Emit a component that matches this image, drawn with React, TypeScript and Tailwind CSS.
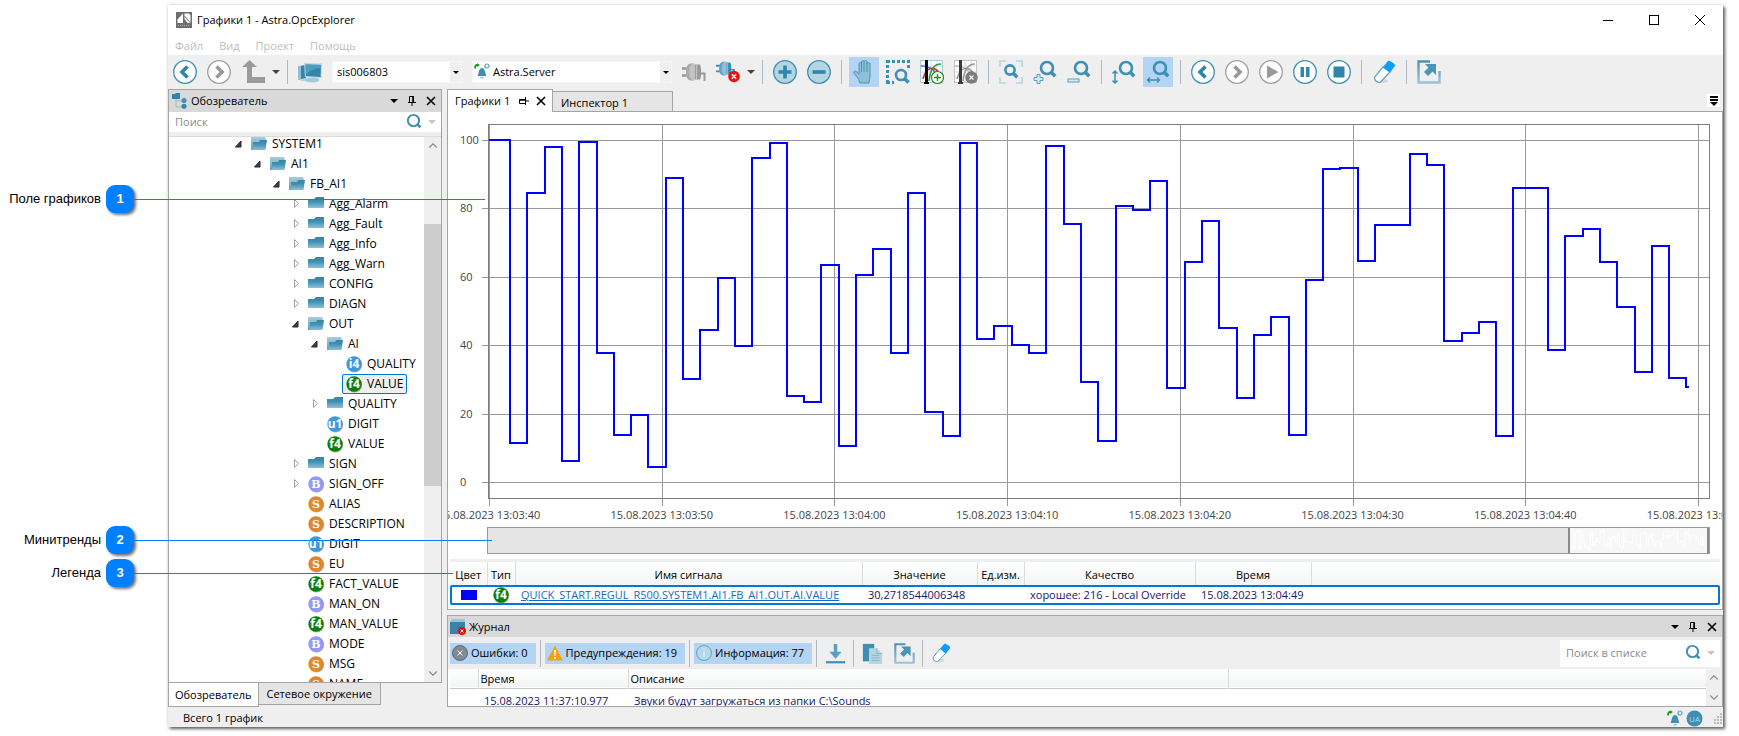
import type { ReactNode } from 'react'
import { ChevronDown, ChevronUp } from 'lucide-react'

type NodeKind = 'open' | 'closed' | 'i4' | 'f4' | 'u1' | 'B' | 'S'

interface TreeItem {
  name: string
  level: number
  kind: NodeKind
  expandable?: boolean
  selected?: boolean
}

const tree: TreeItem[] = [
  { name: 'SYSTEM1', level: 0, kind: 'open' },
  { name: 'AI1', level: 1, kind: 'open' },
  { name: 'FB_AI1', level: 2, kind: 'open' },
  { name: 'Agg_Alarm', level: 3, kind: 'closed', expandable: true },
  { name: 'Agg_Fault', level: 3, kind: 'closed', expandable: true },
  { name: 'Agg_Info', level: 3, kind: 'closed', expandable: true },
  { name: 'Agg_Warn', level: 3, kind: 'closed', expandable: true },
  { name: 'CONFIG', level: 3, kind: 'closed', expandable: true },
  { name: 'DIAGN', level: 3, kind: 'closed', expandable: true },
  { name: 'OUT', level: 3, kind: 'open' },
  { name: 'AI', level: 4, kind: 'open' },
  { name: 'QUALITY', level: 5, kind: 'i4' },
  { name: 'VALUE', level: 5, kind: 'f4', selected: true },
  { name: 'QUALITY', level: 4, kind: 'closed', expandable: true },
  { name: 'DIGIT', level: 4, kind: 'u1' },
  { name: 'VALUE', level: 4, kind: 'f4' },
  { name: 'SIGN', level: 3, kind: 'closed', expandable: true },
  { name: 'SIGN_OFF', level: 3, kind: 'B', expandable: true },
  { name: 'ALIAS', level: 3, kind: 'S' },
  { name: 'DESCRIPTION', level: 3, kind: 'S' },
  { name: 'DIGIT', level: 3, kind: 'u1' },
  { name: 'EU', level: 3, kind: 'S' },
  { name: 'FACT_VALUE', level: 3, kind: 'f4' },
  { name: 'MAN_ON', level: 3, kind: 'B' },
  { name: 'MAN_VALUE', level: 3, kind: 'f4' },
  { name: 'MODE', level: 3, kind: 'B' },
  { name: 'MSG', level: 3, kind: 'S' },
  { name: 'NAME', level: 3, kind: 'S' },
]

const samples = [
  100, 11.5, 84.6, 98, 6.2, 99.5, 37.8, 13.8, 19.7, 4.5, 89, 30.2, 44.5, 59.7, 39.9, 94.8, 99.2,
  25.2, 23.5, 63.5, 10.6, 60.6, 68.2, 37.8, 84.6, 20.6, 13.5, 99.2, 41.9, 45.7, 40.2, 37.8, 98.3,
  75.5, 29.3, 12.1, 80.8, 79.6, 88.1, 27.6, 64.4, 76.4, 45.1, 24.7, 43.1, 48.1, 13.8, 59.2, 91.6,
  91.9, 64.7, 75.2, 75.2, 96, 92.8, 41.3, 43.7, 46.9, 13.5, 86.1, 86.1, 38.7, 72, 74.1, 64.4, 51.3,
  32.3, 69.1, 30.5,
]

const timeLabels = [
  '15.08.2023 13:03:40',
  '15.08.2023 13:03:50',
  '15.08.2023 13:04:00',
  '15.08.2023 13:04:10',
  '15.08.2023 13:04:20',
  '15.08.2023 13:04:30',
  '15.08.2023 13:04:40',
  '15.08.2023 13:04:50',
]

const valueY = (v: number) => Math.round(358 - v * 3.42)

// ступенчатая линия тренда в координатах поля графиков
function trendPath() {
  let d = `M7 ${valueY(samples[0])}`
  samples.forEach((v, i) => {
    d += `V${valueY(v)}H${Math.round(28 + i * 17.3)}`
  })
  return d + `V${valueY(27.9)}h3`
}

const badgeColors: Record<string, string> = {
  i4: '#3b97de',
  u1: '#3b97de',
  f4: '#0b800b',
  B: '#9797f7',
  S: '#e0862c',
}

function TypeBadge({ kind }: { kind: string }) {
  return (
    <svg className="w-4 h-4 shrink-0 overflow-visible" viewBox="0 0 16 16">
      <circle cx="8.6" cy="8.8" r="7.6" fill="#777" opacity=".6" />
      <circle cx="8" cy="8" r="7.7" fill={badgeColors[kind]} />
      {kind.length > 1 ? (
        <text x="8" y="12" textAnchor="middle" fill="#fff" className="font-['Open_Sans',sans-serif] text-[12px] font-bold">
          {kind}
        </text>
      ) : (
        <text x="8" y="12" textAnchor="middle" fill="#fff" className="font-['DejaVu_Serif',serif] text-[11px] font-bold">
          {kind}
        </text>
      )}
    </svg>
  )
}

function Folder({ open }: { open: boolean }) {
  return (
    <svg className="w-4 h-4 shrink-0" viewBox="0 0 16 16">
      <defs>
        <linearGradient id="folderBack" x1="0" y1="0" x2="0" y2="1">
          <stop offset="0" stopColor="#a8ccdc" />
          <stop offset="1" stopColor="#5fa0bc" />
        </linearGradient>
        <linearGradient id="folderFront" x1="0" y1="0" x2="0" y2="1">
          <stop offset="0" stopColor="#3585a8" />
          <stop offset=".4" stopColor="#3f8fb2" />
          <stop offset="1" stopColor="#8fc0d5" />
        </linearGradient>
      </defs>
      {open ? (
        <>
          <path d="M0 1h14l1 3v8l-13 2H0z" fill="url(#folderBack)" />
          <path d="M2 6h6l1-2h7l-1.500 10H2z" fill="url(#folderFront)" />
        </>
      ) : (
        <path d="M0 3h6l2-2h8v11H0z" fill="url(#folderFront)" />
      )}
    </svg>
  )
}

function Expander({ item }: { item: TreeItem }) {
  return (
    <svg className="w-2 h-3 shrink-0" viewBox="0 0 8 12">
      {item.kind === 'open' && <path d="M6 3v6H.500z" fill="#404040" stroke="#262626" />}
      {item.expandable && <path d="M2.500 1.500v8l4-4z" fill="#fff" stroke="#a0a0a0" />}
    </svg>
  )
}

function Caret({ className = 'text-[#444]' }: { className?: string }) {
  return (
    <svg className={`w-2 h-1 shrink-0 ${className}`} viewBox="0 0 8 4">
      <path d="M0 0h8L4 4z" fill="currentColor" />
    </svg>
  )
}

function Cross({ className = '' }: { className?: string }) {
  return (
    <svg className={`w-[10px] h-[10px] shrink-0 ${className}`} viewBox="0 0 10 10" stroke="currentColor">
      <path d="M1 1l8 8M9 1L1 9" strokeWidth="1.600" />
    </svg>
  )
}

function Icon({ children, className = 'w-6 h-6' }: { children: ReactNode; className?: string }) {
  return (
    <svg className={`${className} shrink-0`} viewBox="0 0 24 24" fill="none">
      {children}
    </svg>
  )
}

function Lens({ x = 12, y = 9, r = 6 }: { x?: number; y?: number; r?: number }) {
  return (
    <>
      <circle cx={x} cy={y} r={r} stroke="#3d8fb3" strokeWidth="2.600" />
      <path d={`M${x + r * 0.7} ${y + r * 0.7}l4 4`} stroke="#3d8fb3" strokeWidth="3.500" />
    </>
  )
}

function Round({ color, fill = '#fff', children }: { color: string; fill?: string; children: ReactNode }) {
  return (
    <Icon>
      <circle cx="12" cy="12" r="11.300" stroke={color} strokeWidth="1.300" fill={fill} />
      {children}
    </Icon>
  )
}

function Plug({ color, light }: { color: string; light: string }) {
  return (
    <>
      <path d="M0 8.500h6M0 15.500h6" stroke={color} strokeWidth="2.400" />
      <path d="M4 12c0-6 2-8.500 6-8.500h3v17h-3c-4 0-6-2.500-6-8.500z" fill={light} />
      <path d="M4 12c0-6 2-8.500 6-8.500h1C8 5 7 8 7 12s1 7 4 8.500h-1c-4 0-6-2.500-6-8.500z" fill={color} opacity=".6" />
      <path d="M13 4.500h5c1.500 2 1.500 13 0 15h-5z" fill={color} />
      <path d="M14.500 5v14" stroke={light} strokeWidth="1.200" />
      <path d="M19 13.500h3.500V21" stroke={color} strokeWidth="2" />
    </>
  )
}

function Eraser({ className }: { className?: string }) {
  return (
    <Icon className={className}>
      <ellipse cx="9" cy="21" rx="7" ry="2" fill="#ccc" opacity=".7" />
      <path d="M11 7l7 5-9 9.500c-2 2-8-1-6-5z" fill="#fff" stroke="#5a9fc2" strokeWidth="1.200" />
      <path d="M11 7l5-6c1-1 8 3 7 5l-5 6.500z" fill="#0d9df5" />
    </Icon>
  )
}

function Export({ className }: { className?: string }) {
  return (
    <Icon className={className}>
      <path d="M13 1.500H1.500v21h21V11" stroke="url(#exportFrame)" strokeWidth="2.400" />
      <path d="M8 4h11v11l-3.500-3.500-4.500 4.500-4-4L11.500 7.500z" fill="#4a94b5" />
      <defs>
        <linearGradient id="exportFrame" x1="0" y1="0" x2="0" y2="1">
          <stop offset="0" stopColor="#4a94b5" />
          <stop offset="1" stopColor="#9ac4d6" />
        </linearGradient>
      </defs>
    </Icon>
  )
}

function Bell() {
  return (
    <svg className="w-4 h-4 shrink-0" viewBox="0 0 16 16" fill="none">
      <path d="M1 5.500C1 3 1.500 1.800 3.500 2" stroke="#1a9a1a" strokeWidth="1.800" />
      <path d="M3 .300l3 1.700-3 2z" fill="#1a9a1a" />
      <path d="M3.500 13c1.500-2 1-8 4.500-8s3 6 4.500 8z" fill="#3d8fb3" />
      <path d="M6.500 14h3v1.500h-3z" fill="#8fc0d5" />
      <circle cx="13" cy="3" r="2" stroke="#5fa0c0" strokeWidth="1.200" />
    </svg>
  )
}

function ChartGlyph({ curves }: { curves: string[] }) {
  return (
    <>
      <rect x=".5" y=".5" width="22" height="22" fill="#fff" stroke={curves[3]} />
      <path d="M1 6h21M1 12h21M1 17h21M11 1v21M17 1v21" stroke={curves[4]} strokeWidth=".8" />
      <path d="M1 6c9-1 14 6 19 11" stroke={curves[0]} strokeWidth="1.500" />
      <path d="M3 19C6 7 14 5 20 14" stroke={curves[1]} strokeWidth="1.500" />
      <path d="M9 21c1-10 5-17 12-17" stroke={curves[2]} strokeWidth="1.500" />
      <path d="M5 0h3v22h1v2H4v-2h1z" fill={curves[5]} />
    </>
  )
}

function ToolButton({ label, active, children }: { label: string; active?: boolean; children: ReactNode }) {
  return (
    <button
      aria-label={label}
      className={`w-[30px] h-[30px] shrink-0 flex items-center justify-center ${active ? 'bg-[#b3d5f3]' : ''}`}
    >
      {children}
    </button>
  )
}

function Separator({ className = 'h-6 mx-[3px]' }: { className?: string }) {
  return <div className={`w-px shrink-0 bg-[#b0b8bf] ${className}`} />
}

function Combo({ label, value, className, children }: { label: string; value: string; className: string; children?: ReactNode }) {
  return (
    <div className={`relative h-[22px] shrink-0 bg-white ${className}`}>
      <select
        aria-label={label}
        defaultValue={value}
        className={`w-full h-full appearance-none border border-[#f5f5f5] outline-none ${children ? 'pl-5' : 'pl-1'}`}
      >
        <option>{value}</option>
      </select>
      {children && <span className="absolute left-[2px] top-[2px] pointer-events-none">{children}</span>}
      <span className="absolute right-px top-px bottom-px w-[11px] bg-[#efefef] flex items-center justify-center pointer-events-none">
        <svg className="w-[6px] h-[3px]" viewBox="0 0 6 3">
          <path d="M0 0h6L3 3z" fill="#000" />
        </svg>
      </span>
    </div>
  )
}

function Pin({ className = '' }: { className?: string }) {
  return (
    <svg className={`w-[10px] h-[10px] ${className}`} viewBox="0 0 10 10" fill="none" stroke="currentColor">
      <path d="M2.500 6V.500h4V6M1 6.500h8M5 6.500V10M6.500 1v5" />
      <path d="M6 .500V6" strokeWidth="1.500" />
    </svg>
  )
}

function PanelButtons() {
  return (
    <div className="ml-auto flex items-center gap-[9px] pr-[5px]">
      <button aria-label="Меню">
        <Caret className="text-black" />
      </button>
      <button aria-label="Закрепить">
        <Pin />
      </button>
      <button aria-label="Закрыть">
        <Cross />
      </button>
    </div>
  )
}

function SearchBox({ id, text, className }: { id: string; text: string; className: string }) {
  return (
    <div className={`bg-white flex items-center pl-[6px] pr-[5px] ${className}`}>
      <label htmlFor={id} className="sr-only">
        {text}
      </label>
      <input id={id} placeholder={text} className="flex-1 min-w-0 outline-none placeholder:text-[#8a8a8a]" />
      <button aria-label={text}>
        <Icon className="w-[18px] h-[18px]">
          <Lens x={10} y={10} r={7.5} />
        </Icon>
      </button>
      <Caret className="ml-1 text-[#c4c4c4]" />
    </div>
  )
}

function Toolbar() {
  return (
    <div className="h-[34px] shrink-0 flex items-center gap-1 pl-[2px] overflow-hidden">
      <ToolButton label="Назад">
        <Round color="#3d8fb3">
          <path d="M14.500 6.500L9 12l5.500 5.500" stroke="#3085ab" strokeWidth="3.600" />
        </Round>
      </ToolButton>
      <ToolButton label="Вперёд">
        <Round color="#a0a0a0">
          <path d="M9.500 6.500L15 12l-5.500 5.500" stroke="#999" strokeWidth="3.600" />
        </Round>
      </ToolButton>
      <ToolButton label="Вверх">
        <Icon>
          <path d="M8.500 0L16 7h-5v10h14v6H6V7H1z" fill="#9b9b9b" />
        </Icon>
      </ToolButton>
      <Caret />
      <Separator />
      <ToolButton label="Компьютер">
        <Icon>
          <path d="M0 6l8-1v14l-8 1z" fill="#8fc0d5" />
          <path d="M3 6l5-1v13l-5 1z" fill="#3585a8" />
          <path d="M2 20l5-2 3 2v1H3z" fill="#b5d5e2" />
          <ellipse cx="14" cy="20" rx="7.500" ry="2.600" fill="#a5cbdb" />
          <path d="M6 3l18 .500-.500 14.500L7 17z" fill="#b5d5e2" />
          <path d="M7.500 4.500l15.500.500-.500 12L8 16z" fill="#3585a8" />
          <path d="M7.500 4.500l15.500.500-.200 3C16 8.500 12 11 8 14z" fill="#4f9dbf" />
        </Icon>
      </ToolButton>
      <Combo label="Узел" value="sis006803" className="w-[130px] ml-[3px]" />
      <Combo label="Сервер" value="Astra.Server" className="w-[200px] ml-[6px]">
        <Bell />
      </Combo>
      <div className="ml-[3px]">
        <ToolButton label="Подключить">
          <Icon>
            <Plug color="#999" light="#c4c4c4" />
          </Icon>
        </ToolButton>
      </div>
      <ToolButton label="Отключить">
        <Icon>
          <g transform="translate(0 -1) scale(.8)">
            <Plug color="#3d8fb3" light="#8fc0d5" />
          </g>
          <circle cx="18" cy="16.500" r="5.800" fill="#f20d0d" />
          <path d="M15.800 14.300l4.400 4.400m0-4.400l-4.400 4.400" stroke="#fff" strokeWidth="1.500" />
        </Icon>
      </ToolButton>
      <Caret />
      <Separator />
      <ToolButton label="Добавить">
        <Round color="#3d8fb3" fill="#b5d5e2">
          <path d="M12 5.500v13M5.500 12h13" stroke="#3085ab" strokeWidth="3.600" />
        </Round>
      </ToolButton>
      <ToolButton label="Удалить">
        <Round color="#3d8fb3" fill="#b5d5e2">
          <path d="M5.500 12h13" stroke="#3085ab" strokeWidth="3.600" />
        </Round>
      </ToolButton>
      <Separator />
      <ToolButton label="Перемещение" active>
        <Icon>
          <path
            d="M8 23c-1-5-6-9-6.500-11 1.500-2 4 0 5.500 2V4c0-2 2.500-2 2.500 0V2c0-2 2.500-2 2.500 0 0-2 3-2 3 0v2c0-2 3-2 3 0v12c0 4-1 4-1 7z"
            fill="#8fbfd8"
            stroke="#4a94b5"
          />
          <path d="M9.500 4v8M12 2v10M15 3v9" stroke="#4a94b5" />
        </Icon>
      </ToolButton>
      <ToolButton label="Выделить область">
        <Icon>
          <path d="M0 1.500h24" stroke="#3d8fb3" strokeWidth="3" strokeDasharray="4 2 3 2 3 2 3 2 3" />
          <path d="M1.500 5v19M22.500 0v8" stroke="#3d8fb3" strokeWidth="3" strokeDasharray="3 2" />
          <path d="M0 22.500h8" stroke="#3d8fb3" strokeWidth="3" strokeDasharray="4 2" />
          <Lens x={15} y={15} r={5} />
        </Icon>
      </ToolButton>
      <ToolButton label="Добавить курсор">
        <Icon>
          <ChartGlyph curves={['#3d6fe0', '#e02020', '#2f9a3f', '#a8ccdc', '#bcdcf0', '#000']} />
          <circle cx="17.500" cy="17.500" r="6" fill="#fff" stroke="#2a8a2a" strokeWidth="1.200" />
          <path d="M17.500 14v7M14 17.500h7" stroke="#2a8a2a" strokeWidth="1.400" />
        </Icon>
      </ToolButton>
      <ToolButton label="Удалить курсор">
        <Icon>
          <ChartGlyph curves={['#bbb', '#999', '#999', '#c4c4c4', '#d4d4d4', '#3a3a3a']} />
          <circle cx="17.500" cy="17.500" r="6.200" fill="#7c7c7c" />
          <path d="M15.500 15.500l4 4m0-4l-4 4" stroke="#fff" strokeWidth="1.200" />
        </Icon>
      </ToolButton>
      <Separator />
      <ToolButton label="Показать всё">
        <Icon>
          <path d="M1 7V1h6M17 1h6v6M23 17v6h-6M7 23H1v-6" stroke="#b5d5e2" strokeWidth="1.600" />
          <Lens x={11} y={10} r={4.6} />
        </Icon>
      </ToolButton>
      <ToolButton label="Увеличить">
        <Icon>
          <Lens x={14} y={8} />
          <path d="M4 14.500h3v3h3v3H7v3H4v-3H1v-3h3z" fill="#d6e9f1" stroke="#5fa0bc" />
        </Icon>
      </ToolButton>
      <ToolButton label="Уменьшить">
        <Icon>
          <Lens x={14} y={8} />
          <rect x="1" y="19" width="11" height="3" fill="#d6e9f1" stroke="#5fa0bc" />
        </Icon>
      </ToolButton>
      <Separator />
      <ToolButton label="Масштаб по вертикали">
        <Icon>
          <Lens x={14} y={8} />
          <path d="M3 11v12M.500 13.500L3 11l2.500 2.500M.500 20.500L3 23l2.500-2.500" stroke="#3d8fb3" strokeWidth="1.500" />
        </Icon>
      </ToolButton>
      <ToolButton label="Масштаб по горизонтали" active>
        <Icon>
          <Lens x={14} y={8} />
          <path d="M2 20h11M4 17.500L1.500 20 4 22.500M11 17.500l2.500 2.500-2.500 2.500" stroke="#3d8fb3" strokeWidth="1.400" />
        </Icon>
      </ToolButton>
      <Separator />
      <ToolButton label="Предыдущий">
        <Round color="#3d8fb3">
          <path d="M14.500 6.500L9 12l5.500 5.500" stroke="#3085ab" strokeWidth="3.600" />
        </Round>
      </ToolButton>
      <ToolButton label="Следующий">
        <Round color="#a0a0a0">
          <path d="M9.500 6.500L15 12l-5.500 5.500" stroke="#999" strokeWidth="3.600" />
        </Round>
      </ToolButton>
      <ToolButton label="Пуск">
        <Round color="#a0a0a0">
          <path d="M8 5.500L19.500 12 8 18.500z" fill="#999" />
        </Round>
      </ToolButton>
      <ToolButton label="Пауза">
        <Round color="#3d8fb3">
          <path d="M7.500 7h3.500v10H7.500zM13 7h3.500v10H13z" fill="#3085ab" />
        </Round>
      </ToolButton>
      <ToolButton label="Стоп">
        <Round color="#3d8fb3">
          <path d="M6.500 6.500h11v11h-11z" fill="#3085ab" />
        </Round>
      </ToolButton>
      <Separator />
      <ToolButton label="Очистить">
        <Eraser />
      </ToolButton>
      <Separator />
      <ToolButton label="Открыть в новом окне">
        <Export />
      </ToolButton>
    </div>
  )
}

function Explorer() {
  return (
    <aside className="w-[274px] shrink-0 flex flex-col min-h-0">
      <section className="flex-1 min-h-0 flex flex-col border border-[#a5a5a5] bg-[#efefef]">
        <header className="h-[22px] shrink-0 bg-[#d9d9d9] flex items-center pl-[3px] gap-[3px]">
          <svg className="w-4 h-4" viewBox="0 0 16 16" fill="none">
            <path d="M4 6v8h6M4 8h6" stroke="#9fbfcd" />
            <path d="M0 1h3l1-1h4v6H0z" fill="#2f85ab" />
            <circle cx="12" cy="7.500" r="2.500" fill="#3d8fb3" />
            <circle cx="12" cy="13.300" r="2.500" fill="#3085ab" />
          </svg>
          <h2>Обозреватель</h2>
          <PanelButtons />
        </header>
        <SearchBox id="tree-search" text="Поиск" className="h-5 shrink-0" />
        <div className="mt-1 border-t border-[#dcdcdc] flex-1 min-h-0 flex bg-white">
          <ul className="flex-1 overflow-hidden -mt-[3px] text-[12px] [clip-path:inset(3px_0_0_0)]">
            {tree.map((item, i) => (
              <li key={i} className="h-5 flex items-center gap-2" style={{ paddingLeft: 66 + item.level * 19 }}>
                <Expander item={item} />
                <span
                  className={`h-5 flex items-center gap-[5px] whitespace-nowrap ${
                    item.selected ? 'border border-[#0078d7] rounded-xs bg-[#efefef] -ml-1 px-[3px]' : ''
                  }`}
                >
                  {item.kind === 'open' || item.kind === 'closed' ? (
                    <Folder open={item.kind === 'open'} />
                  ) : (
                    <TypeBadge kind={item.kind} />
                  )}
                  {item.name}
                </span>
              </li>
            ))}
          </ul>
          <div className="w-[17px] shrink-0 bg-[#efefef] flex flex-col items-center text-[#909090]">
            <ChevronUp className="w-[14px] h-[17px]" />
            <div className="w-full mt-[70px] h-[262px] bg-[#cdcdcd]" />
            <ChevronDown className="w-[14px] h-[17px] mt-auto" />
          </div>
        </div>
      </section>
      <div className="h-6 shrink-0 flex items-start">
        <button className="h-6 px-[6px] pt-px bg-white border border-t-0 border-[#a5a5a5]">Обозреватель</button>
        <button className="h-[22px] px-2 pt-px bg-[#e5e5e5] border border-t-0 border-l-0 border-[#a5a5a5]">
          Сетевое окружение
        </button>
      </div>
    </aside>
  )
}

function Chart() {
  return (
    <div className="flex-1 min-h-0 flex flex-col pt-3 text-[#444] overflow-hidden">
      <div className="flex-1 min-h-0 flex pr-3">
        <div className="w-[34px] shrink-0 pl-3 pt-4 pb-6 flex flex-col justify-between">
          {[100, 80, 60, 40, 20, 0].map((v) => (
            <span key={v} className="h-0 flex items-center">
              {v}
            </span>
          ))}
        </div>
        <svg
          className="flex-1 min-w-0 h-full"
          viewBox="0 0 1228 382"
          preserveAspectRatio="none"
          fill="none"
          shapeRendering="crispEdges"
        >
          {[100, 80, 60, 40, 20, 0].map((v) => (
            <path key={v} d={`M0 ${valueY(v) + 0.5}H1227`} stroke="#9a9a9a" />
          ))}
          {timeLabels.map((t, i) => (
            <path key={t} d={`M${Math.round(7 + i * 172.7) + 0.5} 0V382`} stroke="#9a9a9a" />
          ))}
          <path d="M6.500 .500H1227.500V374.500H6.500z" stroke="#7d7d7d" />
          <path d={trendPath()} stroke="#0000ff" strokeWidth="2" />
        </svg>
      </div>
      <div className="h-[21px] pb-[3px] shrink-0 flex justify-between items-center pl-[41px] pr-[24px]">
        {timeLabels.map((t) => (
          <time key={t} className="w-0 flex justify-center whitespace-nowrap">
            {t}
          </time>
        ))}
      </div>
      <div className="h-[27px] shrink-0 ml-[39px] mr-3 border border-[#9a9a9a] bg-[#e5e5e5] flex justify-end">
        <div className="w-[141px] bg-[#f7f7f7] border-l-2 border-r-2 border-[#8a8a8a]">
          <svg className="w-full h-full" viewBox="0 -10 1228 400" preserveAspectRatio="none" fill="none">
            <path d={trendPath()} stroke="#fff" strokeWidth="1" vectorEffect="non-scaling-stroke" />
          </svg>
        </div>
      </div>
    </div>
  )
}

function Legend() {
  const head = 'border-r border-[#dcdcdc] font-normal text-black pt-[2px]'
  return (
    <div className="mt-[5px] mb-1 mx-[2px] border-t-[3px] border-[#efefef] shrink-0">
      <table className="w-full table-fixed border-collapse">
        <colgroup>
          <col className="w-[37px]" />
          <col className="w-[28px]" />
          <col className="w-[347px]" />
          <col className="w-[115px]" />
          <col className="w-[47px]" />
          <col className="w-[171px]" />
          <col className="w-[116px]" />
          <col />
        </colgroup>
        <thead>
          <tr className="h-[23px] bg-linear-to-b from-white to-[#f3f5f5]">
            <th className={head}>Цвет</th>
            <th className={head}>Тип</th>
            <th className={head}>Имя сигнала</th>
            <th className={head}>Значение</th>
            <th className={head}>Ед.изм.</th>
            <th className={head}>Качество</th>
            <th className={head}>Время</th>
            <th />
          </tr>
        </thead>
        <tbody>
          <tr className="h-5 text-[#16166b] whitespace-nowrap outline-2 outline-[#0078d7] -outline-offset-2 rounded-xs">
            <td>
              <div className="w-4 h-[10px] ml-[11px] bg-[#0000ff]" />
            </td>
            <td>
              <div className="flex justify-center">
                <TypeBadge kind="f4" />
              </div>
            </td>
            <td className="px-[6px] overflow-hidden">
              <a href="#signal" className="text-[#0f6cc9] underline">
                QUICK_START.REGUL_R500.SYSTEM1.AI1.FB_AI1.OUT.AI.VALUE
              </a>
            </td>
            <td className="px-[6px]">30,2718544006348</td>
            <td />
            <td className="px-[6px]">
              <div className="overflow-hidden">хорошее: 216 - Local Override</div>
            </td>
            <td className="px-[6px]">15.08.2023 13:04:49</td>
            <td />
          </tr>
        </tbody>
      </table>
    </div>
  )
}

function Charts() {
  return (
    <section className="flex-1 min-h-0 flex flex-col">
      <div className="h-[22px] shrink-0 flex items-end relative z-10">
        <button className="h-[23px] w-[106px] -mb-px pl-[7px] bg-white border border-b-0 border-[#a5a5a5] flex items-center">
          Графики 1
          <Pin className="ml-[9px] -rotate-90" />
          <Cross className="ml-[7px]" />
        </button>
        <button className="h-5 w-[120px] pl-2 pt-[2px] bg-[#e5e5e5] border border-l-0 border-b-0 border-[#a5a5a5] text-left">
          Инспектор 1
        </button>
        <button aria-label="Список вкладок" className="ml-auto mr-[3px] mb-1 w-[13px] h-[13px] bg-white flex justify-center items-center">
          <svg className="w-2 h-[10px]" viewBox="0 0 8 10">
            <path d="M0 0h8v2H0zM0 3h8v2H0zM0 6h8L4 10z" fill="#000" />
          </svg>
        </button>
      </div>
      <div className="flex-1 min-h-0 flex flex-col bg-white border border-[#a5a5a5]">
        <Chart />
        <Legend />
      </div>
    </section>
  )
}

function LogFilter({ label, children }: { label: string; children: ReactNode }) {
  return (
    <button className="h-[21px] shrink-0 pl-[2px] pr-2 bg-[#b3d5f3] flex items-center gap-[3px] whitespace-nowrap">
      {children}
      {label}
    </button>
  )
}

function Journal() {
  return (
    <section className="shrink-0 mt-[5px] border border-[#a5a5a5]">
      <header className="h-[21px] bg-[#d9d9d9] flex items-center pl-[2px] gap-[3px]">
        <svg className="w-4 h-4" viewBox="0 0 16 16">
          <path d="M0 3l2-3h13v3z" fill="#9cc5d6" />
          <path d="M0 3h15v12H0z" fill="#3585a8" />
          <circle cx="12" cy="12" r="4" fill="#e01010" />
          <path d="M10.500 10.500l3 3m0-3l-3 3" stroke="#fff" />
        </svg>
        <h2>Журнал</h2>
        <PanelButtons />
      </header>
      <div className="h-8 flex items-center pl-[2px] gap-1 pr-[2px]">
        <LogFilter label="Ошибки: 0">
          <svg className="w-4 h-4" viewBox="0 0 16 16">
            <circle cx="8" cy="8" r="7.500" fill="#7f8a93" stroke="#5f6870" />
            <path d="M5.500 5.500l5 5m0-5l-5 5" stroke="#fff" />
          </svg>
        </LogFilter>
        <Separator className="h-[27px]" />
        <LogFilter label="Предупреждения: 19">
          <svg className="w-4 h-4" viewBox="0 0 16 16">
            <path d="M8 .500l8 15H0z" fill="#f5a010" />
            <path d="M7 5h2l-.500 6h-1zM7 12h2v2H7z" fill="#fff" />
          </svg>
        </LogFilter>
        <Separator className="h-[27px]" />
        <LogFilter label="Информация: 77">
          <svg className="w-4 h-4" viewBox="0 0 16 16">
            <circle cx="8" cy="8" r="7.500" fill="#b5d8e8" stroke="#5fa5c5" />
            <path d="M8 6.500v6M8 3.500v1.500" stroke="#d9edf5" strokeWidth="1.500" />
          </svg>
        </LogFilter>
        <Separator className="h-[27px]" />
        <button aria-label="Прокрутить вниз" className="w-7 flex justify-center">
          <Icon className="w-[21px] h-[21px]">
            <path d="M10 1h4v9h5l-7 8-7-8h5z" fill="#5a9fbe" />
            <path d="M1 22h22" stroke="#3d8fb3" strokeWidth="2.500" />
          </Icon>
        </button>
        <Separator className="h-[27px]" />
        <button aria-label="Копировать" className="w-7 flex justify-center">
          <Icon className="w-[21px] h-[21px]">
            <path d="M1 1h13v20H1z" fill="#3d8fb3" />
            <path d="M8 6h9l6 6v12H8z" fill="#b5d5e2" />
            <path d="M17 6v6h6M11 14h9M11 17h9M11 20h9" stroke="#7fb2c9" />
          </Icon>
        </button>
        <button aria-label="Экспорт" className="w-7 flex justify-center">
          <Export className="w-[21px] h-[21px]" />
        </button>
        <Separator className="h-[27px]" />
        <button aria-label="Очистить журнал" className="w-7 flex justify-center">
          <Eraser className="w-5 h-5" />
        </button>
        <SearchBox id="log-search" text="Поиск в списке" className="ml-auto w-[160px] h-[27px]" />
      </div>
      <div className="h-[37px] bg-white flex overflow-hidden pl-[2px]">
        <table className="flex-1 table-fixed border-collapse h-[44px]">
          <colgroup>
            <col className="w-[28px]" />
            <col className="w-[150px]" />
            <col className="w-[600px]" />
            <col />
          </colgroup>
          <thead>
            <tr className="h-[19px] border-b border-[#c8c8c8] bg-linear-to-b from-white to-[#f3f5f5] text-left">
              <th className="border-r border-[#dcdcdc]" />
              <th className="border-r border-[#dcdcdc] pl-[2px] pt-[2px] font-normal">Время</th>
              <th className="border-r border-[#dcdcdc] pl-[2px] pt-[2px] font-normal">Описание</th>
              <th />
            </tr>
          </thead>
          <tbody>
            <tr className="h-[25px] text-[#16166b]">
              <td />
              <td className="pl-[6px]">15.08.2023 11:37:10.977</td>
              <td className="pl-[6px]">Звуки будут загружаться из папки C:\Sounds</td>
              <td />
            </tr>
          </tbody>
        </table>
        <div className="w-4 shrink-0 bg-[#efefef] flex flex-col items-center justify-between text-[#909090]">
          <ChevronUp className="w-[14px] h-[17px]" />
          <ChevronDown className="w-[14px] h-[17px]" />
        </div>
      </div>
    </section>
  )
}

// выноски поверх окна: подпись, номер и линия к элементу
function Callout({ n, text, top, line }: { n: number; text: string; top: string; line: string }) {
  return (
    <div className={`absolute left-0 flex items-center h-7 font-['Liberation_Sans',sans-serif] pointer-events-none z-20 ${top}`}>
      <span className="w-[106px] pr-[5px] text-right text-[13px]">{text}</span>
      <span className="w-7 h-7 rounded-[9px] bg-[#0080ff] text-white text-[13px] font-bold flex items-center justify-center shadow-[2px_2px_3px_rgba(0,0,0,0.55)]">
        {n}
      </span>
      <span className={`h-px bg-[#0080ff] ${line}`} />
    </div>
  )
}

export default function App() {
  return (
    <div className="relative h-screen bg-white pt-[5px] pr-4 pb-[9px] pl-[168px] text-[11px] leading-4 text-black font-['Open_Sans',sans-serif]">
      <Callout n={1} text="Поле графиков" top="top-[185px]" line="w-[351px]" />
      <Callout n={2} text="Минитренды" top="top-[526px]" line="w-[358px]" />
      <Callout n={3} text="Легенда" top="top-[559px]" line="w-[319px]" />

      <div className="h-full flex flex-col bg-[#efefef] shadow-[2px_2px_3px_rgba(0,0,0,0.6),0_0_4px_rgba(0,0,0,0.15)]">
        <div className="h-[50px] shrink-0 bg-white">
          <div className="h-[30px] flex items-center pl-2">
            <svg className="w-4 h-4" viewBox="0 0 16 16">
              <path d="M0 0h16v16H0z" fill="#6e6e6e" />
              <path d="M1.500 11V7.500L7 1.500V11z" fill="#fff" />
              <path d="M8.500 1.500H13l1.500 2V11h-3L8.500 7z" fill="#fff" />
              <path d="M8.500 4l6 7" stroke="#6e6e6e" />
              <path d="M2 13.500h12" stroke="#b0b0b0" strokeDasharray="1 1" />
            </svg>
            <h1 className="pl-[5px]">Графики 1 - Astra.OpcExplorer</h1>
            <div className="ml-auto flex">
              <button aria-label="Свернуть" className="w-[46px] h-[30px] flex items-center justify-center">
                <span className="w-[10px] h-px bg-black" />
              </button>
              <button aria-label="Развернуть" className="w-[46px] h-[30px] flex items-center justify-center">
                <span className="w-[10px] h-[10px] border border-black" />
              </button>
              <button aria-label="Закрыть окно" className="w-[46px] h-[30px] flex items-center justify-center">
                <svg className="w-[10px] h-[10px]" viewBox="0 0 10 10" stroke="#000">
                  <path d="M0 0l10 10M10 0L0 10" />
                </svg>
              </button>
            </div>
          </div>
          <nav className="flex gap-4 pl-[7px] pt-[3px] text-[#bdbdbd]">
            <button>Файл</button>
            <button>Вид</button>
            <button>Проект</button>
            <button>Помощь</button>
          </nav>
        </div>

        <Toolbar />

        <div className="flex-1 min-h-0 flex gap-[5px]">
          <Explorer />
          <main className="flex-1 min-w-0 flex flex-col">
            <Charts />
            <Journal />
          </main>
        </div>

        <footer className="h-5 shrink-0 flex items-center pl-[15px] pt-[2px]">
          <span>Всего 1 график</span>
          <div className="ml-auto flex items-center gap-[3px]">
            <Bell />
            <svg className="w-[17px] h-[17px]" viewBox="0 0 17 17">
              <circle cx="8.500" cy="8.500" r="8" fill="#3d8fb3" />
              <text x="8.500" y="11.500" textAnchor="middle" fontSize="8" fill="#b5d8e8">
                UA
              </text>
            </svg>
            <svg className="w-[10px] h-[11px] ml-[6px] mr-px" viewBox="0 0 10 11" fill="#b4bcc6">
              <path d="M8 0h2v2H8zM8 3h2v2H8zM8 6h2v2H8zM8 9h2v2H8zM5 3h2v2H5zM5 6h2v2H5zM5 9h2v2H5zM2 6h2v2H2zM2 9h2v2H2z" />
            </svg>
          </div>
        </footer>
      </div>
    </div>
  )
}
